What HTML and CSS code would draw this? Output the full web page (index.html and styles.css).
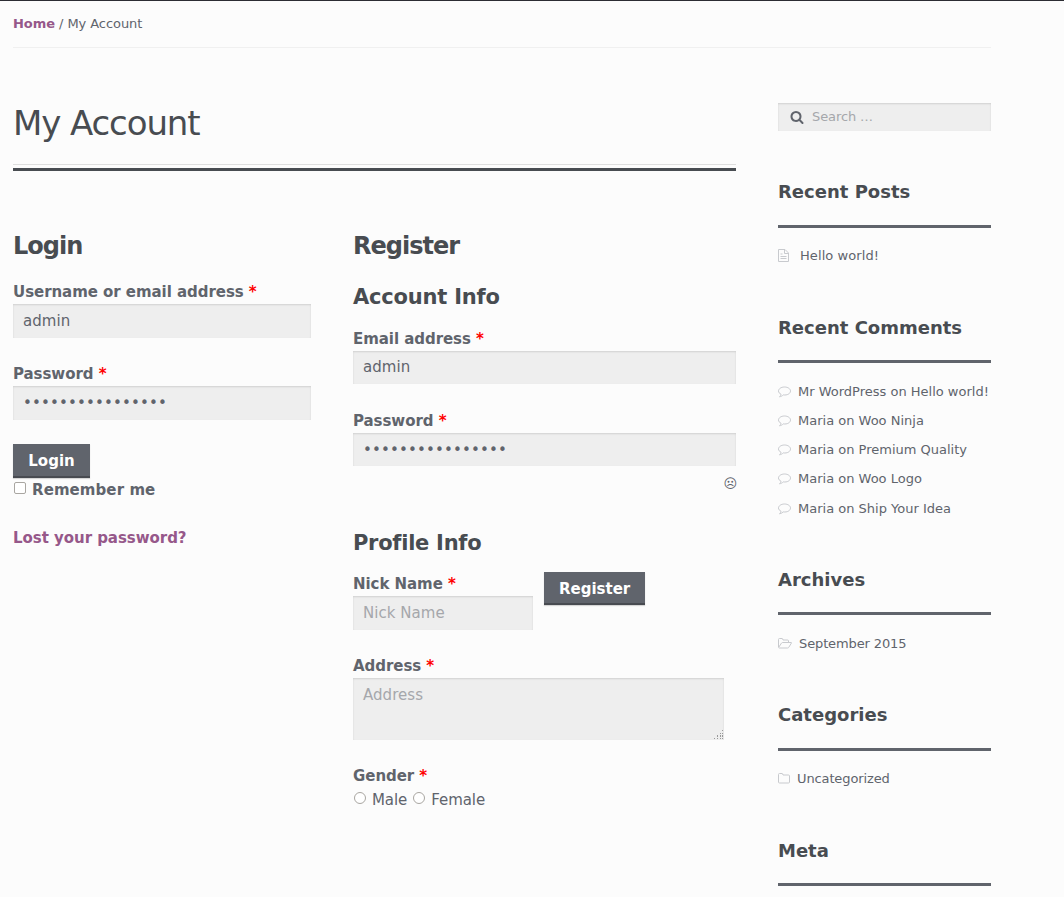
FILE: index.html
```html
<!DOCTYPE html>
<html lang="en">
<head>
<meta charset="utf-8">
<title>My Account</title>
<link rel="stylesheet" href="styles.css">
</head>
<body>
<div class="page">
  <nav class="breadcrumb"><a href="#">Home</a> / My Account</nav>
  <div class="columns">
    <main class="content">
      <h1 class="title">My Account</h1>
      <div class="forms">
        <form class="login">
          <h2>Login</h2>
          <label class="label" for="user">Username or email address <span class="req">*</span></label>
          <input class="field" id="user" type="text" value="admin">
          <label class="label" for="pass">Password <span class="req">*</span></label>
          <input class="field password" id="pass" type="password" value="passwordpassword">
          <button class="button" type="button">Login</button>
          <label class="remember"><input class="check" type="checkbox"><span>Remember me</span></label>
          <a class="lost" href="#">Lost your password?</a>
        </form>
        <form class="register">
          <h2>Register</h2>
          <h3>Account Info</h3>
          <label class="label" for="email">Email address <span class="req">*</span></label>
          <input class="field short" id="email" type="text" value="admin">
          <label class="label" for="newpass">Password <span class="req">*</span></label>
          <input class="field short password" id="newpass" type="password" value="passwordpassword">
          <div class="face">☹</div>
          <h3>Profile Info</h3>
          <div class="nick-row">
            <div class="nick">
              <label class="label" for="nick">Nick Name <span class="req">*</span></label>
              <input class="field" id="nick" type="text" placeholder="Nick Name">
            </div>
            <button class="button short" type="button">Register</button>
          </div>
          <label class="label" for="address">Address <span class="req">*</span></label>
          <div class="address">
            <textarea class="field" id="address" placeholder="Address"></textarea>
            <svg class="grip" width="10" height="10" viewBox="0 0 10 10"><path d="M8 0h1v1h-1zM6 3h1v1h-1zM8 3h1v1h-1zM3 5h1v1h-1zM6 5h1v1h-1zM8 5h1v1h-1zM3 6h1v1h-1zM6 6h1v1h-1zM8 6h1v1h-1zM0 8h1v1h-1zM3 8h1v1h-1zM6 8h1v1h-1zM8 8h1v1h-1z"/></svg>
          </div>
          <div class="label">Gender <span class="req">*</span></div>
          <div class="radios">
            <label><input class="check radio" type="radio" name="gender"><span>Male</span></label>
            <label><input class="check radio" type="radio" name="gender"><span>Female</span></label>
          </div>
        </form>
      </div>
    </main>
    <aside class="sidebar">
      <div class="search">
        <svg width="14" height="14" viewBox="0 0 1792 1792"><path d="M1216 832q0-185-131.500-316.500t-316.500-131.500-316.500 131.500-131.500 316.500 131.500 316.500 316.500 131.500 316.500-131.500 131.500-316.500zm512 832q0 52-38 90t-90 38q-54 0-90-38l-343-342q-179 124-399 124-143 0-273.500-55.500t-225-150-150-225-55.500-273.500 55.500-273.500 150-225 225-150 273.500-55.500 273.500 55.500 225 150 150 225 55.500 273.500q0 220-124 399l343 343q37 37 37 90z"/></svg>
        <input type="text" placeholder="Search …">
      </div>
      <section class="widget posts">
        <h4>Recent Posts</h4>
        <ul><li><svg width="11" height="13" viewBox="0 0 11 13"><path d="M.5.5h6.500l3.500 3.500v8.500h-10zM6.500.5v4h4M2.500 5h2M2.500 7.500h6M2.500 9.500h6"/></svg><a href="#">Hello world!</a></li></ul>
      </section>
      <section class="widget comments">
        <h4>Recent Comments</h4>
        <ul>
          <li><svg width="13" height="12" viewBox="0 0 13 12"><path d="M6.500 1C3.200 1 .5 2.800.5 5c0 1.400 1 2.500 2.500 3.200 0 1-.5 1.700-1.500 2.500 1.600-.1 2.800-.8 3.700-1.800 4.200.6 7.300-1.400 7.300-3.900C12.500 2.800 9.800 1 6.500 1z"/></svg><span>Mr WordPress on <a href="#">Hello world!</a></span></li>
          <li><svg width="13" height="12" viewBox="0 0 13 12"><path d="M6.500 1C3.200 1 .5 2.800.5 5c0 1.400 1 2.500 2.500 3.200 0 1-.5 1.700-1.500 2.500 1.600-.1 2.800-.8 3.700-1.800 4.200.6 7.300-1.400 7.300-3.900C12.500 2.800 9.800 1 6.500 1z"/></svg><span>Maria on <a href="#">Woo Ninja</a></span></li>
          <li><svg width="13" height="12" viewBox="0 0 13 12"><path d="M6.500 1C3.200 1 .5 2.800.5 5c0 1.400 1 2.500 2.500 3.200 0 1-.5 1.700-1.500 2.500 1.600-.1 2.800-.8 3.700-1.800 4.200.6 7.300-1.400 7.300-3.900C12.500 2.800 9.800 1 6.500 1z"/></svg><span>Maria on <a href="#">Premium Quality</a></span></li>
          <li><svg width="13" height="12" viewBox="0 0 13 12"><path d="M6.500 1C3.200 1 .5 2.800.5 5c0 1.400 1 2.500 2.500 3.200 0 1-.5 1.700-1.500 2.500 1.600-.1 2.800-.8 3.700-1.800 4.200.6 7.300-1.400 7.300-3.900C12.500 2.800 9.800 1 6.500 1z"/></svg><span>Maria on <a href="#">Woo Logo</a></span></li>
          <li><svg width="13" height="12" viewBox="0 0 13 12"><path d="M6.500 1C3.200 1 .5 2.800.5 5c0 1.400 1 2.500 2.500 3.200 0 1-.5 1.700-1.500 2.500 1.600-.1 2.800-.8 3.700-1.800 4.200.6 7.300-1.400 7.300-3.900C12.500 2.800 9.800 1 6.500 1z"/></svg><span>Maria on <a href="#">Ship Your Idea</a></span></li>
        </ul>
      </section>
      <section class="widget archives">
        <h4>Archives</h4>
        <ul><li><svg width="14" height="11" viewBox="0 0 14 11"><path d="M.5 9V1.500q0-1 1-1h2.500q1 0 1 1.500h4.500q1 0 1 1v1.500M.7 9.300l2.800-4.200q.4-.6 1-.6h8.700q.6 0 .2.600l-2.600 4.200q-.5.700-1.200.7H1.200q-.7 0-.5-.7z"/></svg><a href="#">September 2015</a></li></ul>
      </section>
      <section class="widget categories">
        <h4>Categories</h4>
        <ul><li><svg width="12" height="11" viewBox="0 0 12 11"><path d="M.5 9V1.500q0-1 1-1h2.500q1 0 1 1.500h5.500q1 0 1 1v6q0 1-1 1h-9q-1 0-1-1z"/></svg><a href="#">Uncategorized</a></li></ul>
      </section>
      <section class="widget meta">
        <h4>Meta</h4>
      </section>
    </aside>
  </div>
</div>
</body>
</html>
```
FILE: styles.css
```css
* { box-sizing: border-box; }
html { background: #fcfcfc; }
body {
  margin: 0;
  height: 897px;
  overflow: hidden;
  border-top: 1px solid #2c2d33;
  color: #60646c;
  font: 15px/24px "DejaVu Sans", sans-serif;
}
a { color: inherit; text-decoration: none; }
h1, h2, h3, h4, ul { margin: 0; padding: 0; }
h1, h2, h3, h4 { color: #484c51; }
.page { width: 978px; margin-left: 13px; }
.breadcrumb {
  height: 47px;
  padding-top: 11px;
  border-bottom: 1px solid #f0f0f0;
  font-size: 13px;
  letter-spacing: -.06px;
}
.breadcrumb a, .lost { color: #96588a; font-weight: bold; }
.columns { display: flex; justify-content: space-between; padding-top: 55px; }
.content { width: 723px; }
.title {
  height: 68px;
  border-bottom: 3px solid #484c51;
  font-size: 34px;
  font-weight: normal;
  letter-spacing: -1.100px;
  line-height: 40px;
  position: relative;
}
.title::after {
  content: "";
  position: absolute;
  inset: auto 0 3px 0;
  border-bottom: 1px solid #dedede;
}
.forms { display: flex; gap: 42px; padding-top: 59px; }
.login { width: 298px; }
.register { width: 383px; }
h2 { font-size: 24px; line-height: 32px; letter-spacing: -1px; }
h3 { font-size: 21px; line-height: 28px; letter-spacing: -.2px; }
.label { display: block; height: 24px; font-weight: bold; letter-spacing: -.05px; }
.req { color: #f00; }
.field {
  display: block;
  width: 100%;
  height: 34px;
  margin: 0 0 24px;
  padding: 0 10px 1px;
  border: 0;
  border-radius: 0;
  outline: 0;
  background: #eee;
  box-shadow: inset 0 1px 2px rgba(0, 0, 0, .125);
  color: #60646c;
  font: 15px/24px "DejaVu Sans", sans-serif;
  letter-spacing: .04px;
}
.field.short { height: 33px; margin-bottom: 25px; padding-bottom: 2px; }
.field.password { letter-spacing: .15px; padding-bottom: 0; }
.field::placeholder, .search input::placeholder { color: #a5a7ab; opacity: 1; }
.login .label:first-of-type { margin-top: 18px; }
.button {
  display: block;
  height: 34px;
  padding: 0 15px;
  border: 0;
  background: #60646c;
  box-shadow: inset 0 -2px 0 #484b51, 0 1px 1px rgba(0, 0, 0, .15);
  color: #fff;
  font: bold 15px/32px "DejaVu Sans", sans-serif;
}
.login .button { width: 77px; }
.button.short { height: 33px; }
.remember, .radios, .radios label { display: flex; align-items: flex-start; }
.remember { font-weight: bold; letter-spacing: .08px; height: 24px; }
.check {
  appearance: none;
  width: 12px;
  height: 12px;
  margin: 4px 6px 0 1px;
  border: 1px solid #a9a6a1;
  border-radius: 2px;
  background: #fff;
}
.radio { border-radius: 50%; margin-top: 4px; }
.radios { gap: 5px; letter-spacing: -.07px; }
.lost { display: block; margin-top: 24px; letter-spacing: -.04px; }
.register h3 { margin-top: 21px; margin-bottom: 16px; }
.face { height: 24px; margin-top: -19px; margin-right: -1px; text-align: right; font-size: 13px; }
.register .face + h3 { margin: 33px 0 15px; letter-spacing: -.27px; }
.nick-row { display: flex; gap: 11px; }
.nick { width: 180px; }
.address { position: relative; width: 371px; height: 62px; margin-bottom: 24px; }
.address textarea { height: 62px; padding: 5px 10px; resize: none; }
.grip { position: absolute; right: 0; bottom: 0; fill: #999; }
.sidebar { width: 213px; font-size: 13px; }
.search {
  display: flex;
  align-items: center;
  gap: 8px;
  height: 28px;
  padding: 0 0 1px 12px;
  background: #eee;
  box-shadow: inset 0 1px 2px rgba(0, 0, 0, .125);
}
.search svg { fill: #60646c; }
.search input {
  width: 150px;
  padding: 0 0 1px;
  border: 0;
  background: none;
  font: 13px "DejaVu Sans", sans-serif;
  letter-spacing: -.1px;
}
.widget h4 {
  height: 51px;
  border-bottom: 3px solid #60646c;
  font-size: 18px;
  line-height: 30px;
}
.widget ul { list-style: none; padding-top: 16px; }
.widget li { display: flex; align-items: center; height: 24px; margin-bottom: 5.130px; }
.widget li svg { flex: none; margin-right: 7px; fill: none; stroke: #c8cace; stroke-width: 1; }
.posts { height: 136px; margin-top: 46px; }
.posts li svg { margin-right: 11px; position: relative; top: -1px; }
.posts li { letter-spacing: .08px; }
.comments { height: 252px; }
.comments h4, .archives h4, .meta h4 { height: 50px; }
.comments ul, .archives ul { padding-top: 17px; }
.archives { height: 135px; }
.categories { height: 136px; }
.archives li, .categories li { letter-spacing: -.12px; }
.archives svg, .categories svg { position: relative; top: -1px; }
```
